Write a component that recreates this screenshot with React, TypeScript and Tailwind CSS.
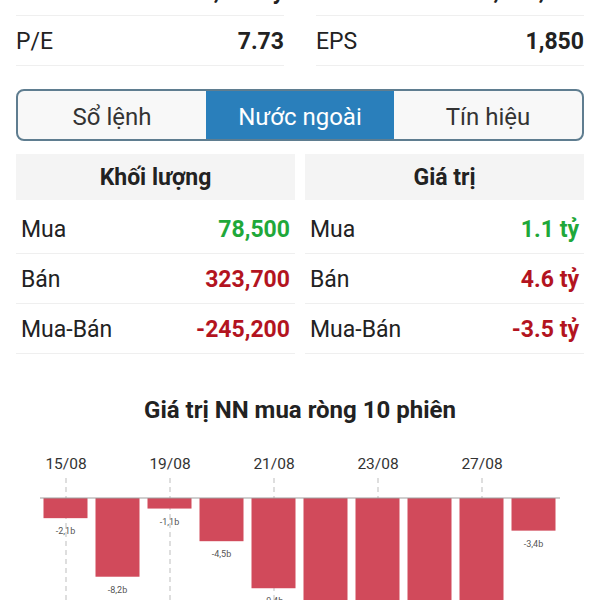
import React from "react";

const topRows = [
  [
    { label: "Vốn hóa", value: "1,430 tỷ" },
    { label: "KLCPLH", value: "7,730,000" },
  ],
  [
    { label: "P/E", value: "7.73" },
    { label: "EPS", value: "1,850" },
  ],
];

const tabs = ["Sổ lệnh", "Nước ngoài", "Tín hiệu"];

const GREEN = "text-[#1fa83a]";
const RED = "text-[#b3141f]";

const volume = [
  { label: "Mua", value: "78,500", color: GREEN },
  { label: "Bán", value: "323,700", color: RED },
  { label: "Mua-Bán", value: "-245,200", color: RED },
];

const amount = [
  { label: "Mua", value: "1.1 tỷ", color: GREEN },
  { label: "Bán", value: "4.6 tỷ", color: RED },
  { label: "Mua-Bán", value: "-3.5 tỷ", color: RED },
];

// net foreign value, billions
const sessions = [-2.1, -8.2, -1.1, -4.5, -9.4, -13.2, -15.1, -12.6, -14.4, -3.4];
const dateTicks: Record<number, string> = { 0: "15/08", 2: "19/08", 4: "21/08", 6: "23/08", 8: "27/08" };

function StatTable({ title, rows }: { title: string; rows: typeof volume }) {
  return (
    <div className="flex flex-col">
      <div className="h-[46px] mb-[4px] pt-[2px] bg-[#f4f4f4] flex items-center justify-center text-[23px] font-bold text-[#222]">
        {title}
      </div>
      {rows.map((r) => (
        <div
          key={r.label}
          className="h-[50px] px-[5px] pt-[3px] flex items-center justify-between border-b border-[#efefef]"
        >
          <span className="text-[23px] text-[#222]">{r.label}</span>
          <span className={`text-[23px] font-bold ${r.color}`}>{r.value}</span>
        </div>
      ))}
    </div>
  );
}

function NetChart() {
  const left = 40;
  const slot = 52;
  const base = 57;
  const scale = 9.6;
  return (
    <svg width={600} height={160} className="block">
      {Object.entries(dateTicks).map(([i, d]) => {
        const cx = left + slot * Number(i) + slot / 2;
        return (
          <g key={d}>
            <text x={cx} y={28} textAnchor="middle" fontSize={15.5} fill="#333" fontFamily="Roboto">
              {d}
            </text>
            <line x1={cx} y1={37} x2={cx} y2={160} stroke="#bdbdbd" strokeWidth={1} strokeDasharray="5 4" />
          </g>
        );
      })}
      {sessions.map((v, i) => {
        const x = left + slot * i + 3.5;
        const h = Math.abs(v) * scale;
        const cx = x + 22;
        return (
          <g key={i}>
            <rect x={x} y={base} width={44} height={h} fill="#d14a5b" />
            <text x={cx} y={base + h + 16} textAnchor="middle" fontSize={9} fill="#555" fontFamily="Roboto">
              {v.toFixed(1).replace(".", ",")}b
            </text>
          </g>
        );
      })}
      <line x1={left} y1={base} x2={left + slot * 10} y2={base} stroke="#9e9e9e" strokeWidth={1} />
    </svg>
  );
}

export default function App() {
  return (
    <div className="w-[600px] h-[600px] overflow-hidden bg-white font-['Roboto',sans-serif]">
      <div className="mt-[-34px] px-[16px] flex flex-col">
        {topRows.map((row, i) => (
          <div key={i} className="grid grid-cols-2 gap-x-[32px]">
            {row.map((c) => (
              <div key={c.label} className="h-[50px] pt-[3px] flex items-center justify-between border-b border-[#efefef]">
                <span className="text-[23px] text-[#222]">{c.label}</span>
                <span className="text-[23px] font-bold text-[#222]">{c.value}</span>
              </div>
            ))}
          </div>
        ))}
      </div>

      <div className="mt-[23px] mx-[16px] h-[52px] rounded-[8px] border-2 border-[#5f7d90] overflow-hidden grid grid-cols-3 bg-[#f8f8f8]">
        {tabs.map((t, i) => (
          <div
            key={t}
            className={
              i === 1
                ? "pt-[3px] flex items-center justify-center bg-[#2a7fbb] text-white text-[24px]"
                : "pt-[3px] flex items-center justify-center text-[#333] text-[24px]"
            }
          >
            {t}
          </div>
        ))}
      </div>

      <div className="mt-[13px] px-[16px] grid grid-cols-2 gap-x-[10px]">
        <StatTable title="Khối lượng" rows={volume} />
        <StatTable title="Giá trị" rows={amount} />
      </div>

      <div className="mt-[42px] h-[26px] pt-[2px] flex items-center justify-center text-[24px] font-bold text-[#222]">
        Giá trị NN mua ròng 10 phiên
      </div>
      <div className="mt-[19px]">
        <NetChart />
      </div>
    </div>
  );
}
